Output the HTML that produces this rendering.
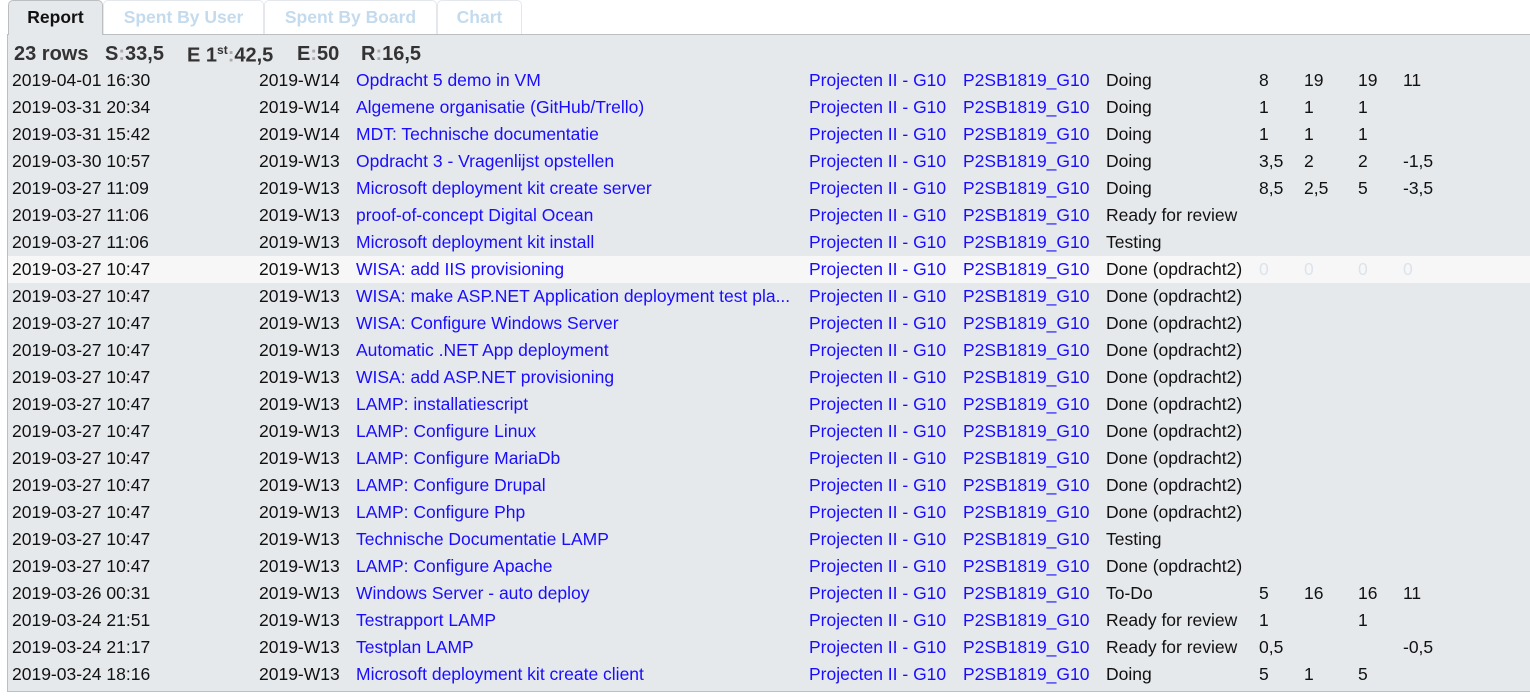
<!DOCTYPE html>
<html><head><style>
body{margin:0;background:#fff;font-family:"Liberation Sans",Arial,sans-serif;width:1530px;height:697px;overflow:hidden;position:relative}
.tab{position:absolute;top:0;height:34px;box-sizing:border-box;border:1px solid #e4e8ec;border-bottom:none;border-radius:5px 5px 0 0;font-weight:bold;font-size:17.5px;line-height:33px;text-align:center;color:#c4dbee;background:#fff}
.panel{position:absolute;left:7px;top:34px;right:-2px;height:658px;box-sizing:border-box;border:1px solid #bcbfc2;background:#e6e9ec}
.hdr{position:absolute;top:43px;font-weight:bold;font-size:20px;color:#333;white-space:nowrap}
.g{color:#aaa}
.row{position:absolute;left:8px;right:0;height:27px;font-size:17.5px;color:#111;white-space:nowrap}
.row div{position:absolute;top:3px}
.hl{background:#f7f7f7}
a{color:#1a0dff;text-decoration:none}
.z{color:#dde3ea}
</style></head><body>
<div class="tab" style="left:8px;width:95px;background:#e6e9ec;border-color:#bcbfc2;color:#111;height:35px;z-index:2">Report</div>
<div class="tab" style="left:103px;width:161px">Spent By User</div>
<div class="tab" style="left:264px;width:173px">Spent By Board</div>
<div class="tab" style="left:437px;width:85px">Chart</div>
<div class="panel"></div>
<div class="hdr" style="left:14px">23 rows</div>
<div class="hdr" style="left:105px">S<span class="g">:</span>33,5</div>
<div class="hdr" style="left:187px">E 1<sup style="font-size:12px">st</sup><span class="g">:</span>42,5</div>
<div class="hdr" style="left:297px">E<span class="g">:</span>50</div>
<div class="hdr" style="left:361px">R<span class="g">:</span>16,5</div>
<div id="rows"></div>
<script>
var d=[
["2019-04-01 16:30","2019-W14","Opdracht 5 demo in VM","Doing","8","19","19","11"],
["2019-03-31 20:34","2019-W14","Algemene organisatie (GitHub/Trello)","Doing","1","1","1",""],
["2019-03-31 15:42","2019-W14","MDT: Technische documentatie","Doing","1","1","1",""],
["2019-03-30 10:57","2019-W13","Opdracht 3 - Vragenlijst opstellen","Doing","3,5","2","2","-1,5"],
["2019-03-27 11:09","2019-W13","Microsoft deployment kit create server","Doing","8,5","2,5","5","-3,5"],
["2019-03-27 11:06","2019-W13","proof-of-concept Digital Ocean","Ready for review","","","",""],
["2019-03-27 11:06","2019-W13","Microsoft deployment kit install","Testing","","","",""],
["2019-03-27 10:47","2019-W13","WISA: add IIS provisioning","Done (opdracht2)","0","0","0","0"],
["2019-03-27 10:47","2019-W13","WISA: make ASP.NET Application deployment test pla...","Done (opdracht2)","","","",""],
["2019-03-27 10:47","2019-W13","WISA: Configure Windows Server","Done (opdracht2)","","","",""],
["2019-03-27 10:47","2019-W13","Automatic .NET App deployment","Done (opdracht2)","","","",""],
["2019-03-27 10:47","2019-W13","WISA: add ASP.NET provisioning","Done (opdracht2)","","","",""],
["2019-03-27 10:47","2019-W13","LAMP: installatiescript","Done (opdracht2)","","","",""],
["2019-03-27 10:47","2019-W13","LAMP: Configure Linux","Done (opdracht2)","","","",""],
["2019-03-27 10:47","2019-W13","LAMP: Configure MariaDb","Done (opdracht2)","","","",""],
["2019-03-27 10:47","2019-W13","LAMP: Configure Drupal","Done (opdracht2)","","","",""],
["2019-03-27 10:47","2019-W13","LAMP: Configure Php","Done (opdracht2)","","","",""],
["2019-03-27 10:47","2019-W13","Technische Documentatie LAMP","Testing","","","",""],
["2019-03-27 10:47","2019-W13","LAMP: Configure Apache","Done (opdracht2)","","","",""],
["2019-03-26 00:31","2019-W13","Windows Server - auto deploy","To-Do","5","16","16","11"],
["2019-03-24 21:51","2019-W13","Testrapport LAMP","Ready for review","1","","1",""],
["2019-03-24 21:17","2019-W13","Testplan LAMP","Ready for review","0,5","","","-0,5"],
["2019-03-24 18:16","2019-W13","Microsoft deployment kit create client","Doing","5","1","5",""]];
var h="";
d.forEach(function(r,i){
var c=i==7?' class="z"':'';
h+='<div class="row'+(i==7?' hl':'')+'" style="top:'+(67+i*27)+'px">'+
'<div style="left:4px">'+r[0]+'</div><div style="left:251px">'+r[1]+'</div>'+
'<div style="left:348px"><a>'+r[2]+'</a></div><div style="left:801px"><a>Projecten II - G10</a></div>'+
'<div style="left:955px"><a>P2SB1819_G10</a></div><div style="left:1098px">'+r[3]+'</div>'+
'<div'+c+' style="left:1251px">'+r[4]+'</div><div'+c+' style="left:1296px">'+r[5]+'</div>'+
'<div'+c+' style="left:1350px">'+r[6]+'</div><div'+c+' style="left:1395px">'+r[7]+'</div></div>';
});
document.getElementById("rows").innerHTML=h;
</script>
</body></html>
